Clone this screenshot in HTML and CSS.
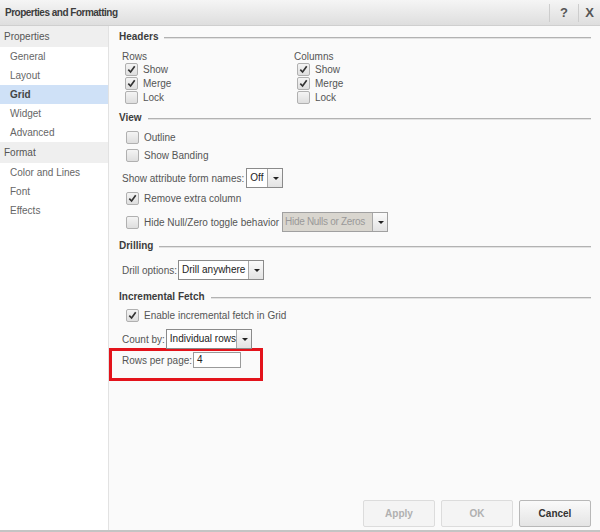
FILE: index.html
```html
<!DOCTYPE html>
<html lang="en">
<head>
  <meta charset="UTF-8" />
  <title>Properties and Formatting</title>
  <link rel="stylesheet" href="styles.css">
</head>
<body>
  <div class="dialog">
    <div class="titlebar">
      <span class="title">Properties and Formatting</span>
      <div class="tb-btns">
        <span class="tb-btn help">?</span>
        <span class="tb-btn close">X</span>
      </div>
    </div>
    <div class="body">
      <nav class="sidebar">
        <div class="nav-head">Properties</div>
        <div class="nav-item">General</div>
        <div class="nav-item">Layout</div>
        <div class="nav-item active">Grid</div>
        <div class="nav-item">Widget</div>
        <div class="nav-item">Advanced</div>
        <div class="nav-head">Format</div>
        <div class="nav-item">Color and Lines</div>
        <div class="nav-item">Font</div>
        <div class="nav-item">Effects</div>
      </nav>
      <main class="content">
        <div class="panel">
          <div class="sec-title">Headers</div>
          <div class="headers-grid">
            <div class="col">
              <div class="col-label">Rows</div>
              <label class="cb-row tight"><span class="cb checked"><svg viewBox="0 0 12 12"><path d="M2.5 6.2 L5 8.8 L9.5 2.5"/></svg></span>Show</label>
              <label class="cb-row tight"><span class="cb checked"><svg viewBox="0 0 12 12"><path d="M2.5 6.2 L5 8.8 L9.5 2.5"/></svg></span>Merge</label>
              <label class="cb-row tight"><span class="cb"></span>Lock</label>
            </div>
            <div class="col">
              <div class="col-label">Columns</div>
              <label class="cb-row tight"><span class="cb checked"><svg viewBox="0 0 12 12"><path d="M2.5 6.2 L5 8.8 L9.5 2.5"/></svg></span>Show</label>
              <label class="cb-row tight"><span class="cb checked"><svg viewBox="0 0 12 12"><path d="M2.5 6.2 L5 8.8 L9.5 2.5"/></svg></span>Merge</label>
              <label class="cb-row tight"><span class="cb"></span>Lock</label>
            </div>
          </div>

          <div class="sec-title view-title">View</div>
          <label class="cb-row outline-row"><span class="cb"></span>Outline</label>
          <label class="cb-row"><span class="cb"></span>Show Banding</label>
          <div class="field-row attr-row">
            <span>Show attribute form names:</span>
            <span class="select sel-off"><span class="sel-text">Off</span><span class="sel-arrow"></span></span>
          </div>
          <label class="cb-row remove-row"><span class="cb checked"><svg viewBox="0 0 12 12"><path d="M2.5 6.2 L5 8.8 L9.5 2.5"/></svg></span>Remove extra column</label>
          <div class="field-row cb-field hide-row">
            <span class="cb"></span>
            <span class="cb-text">Hide Null/Zero toggle behavior</span>
            <span class="select disabled sel-hide"><span class="sel-text">Hide Nulls or Zeros</span><span class="sel-arrow"></span></span>
          </div>

          <div class="sec-title drill-title">Drilling</div>
          <div class="field-row drill-row">
            <span>Drill options:</span>
            <span class="select sel-drill"><span class="sel-text">Drill anywhere</span><span class="sel-arrow"></span></span>
          </div>

          <div class="sec-title fetch-title">Incremental Fetch</div>
          <label class="cb-row enable-row"><span class="cb checked"><svg viewBox="0 0 12 12"><path d="M2.5 6.2 L5 8.8 L9.5 2.5"/></svg></span>Enable incremental fetch in Grid</label>
          <div class="field-row count-row">
            <span>Count by:</span>
            <span class="select sel-count"><span class="sel-text">Individual rows</span><span class="sel-arrow"></span></span>
          </div>
          <div class="highlight">
            <div class="field-row">
              <span>Rows per page:</span>
              <span class="text-input">4</span>
            </div>
          </div>
        </div>
        <div class="footer">
          <button class="btn" disabled>Apply</button>
          <button class="btn" disabled>OK</button>
          <button class="btn primary">Cancel</button>
        </div>
      </main>
    </div>
  </div>
</body>
</html>
```

FILE: styles.css
```css
html, body {
  margin: 0;
  padding: 0;
}
body {
  font-family: "Liberation Sans", Arial, sans-serif;
  font-size: 10px;
  color: #444;
  background: #fff;
}
.dialog {
  width: 600px;
  height: 532px;
  display: flex;
  flex-direction: column;
  box-sizing: border-box;
  border-bottom: 2px solid #c4c4c4;
}
.titlebar {
  height: 25px;
  border-bottom: 1px solid #cfcfcf;
  background: linear-gradient(#f5f5f5, #dedede);
  display: flex;
  align-items: center;
  justify-content: space-between;
  padding-left: 5px;
}
.title {
  font-weight: bold;
  font-size: 10px;
  color: #3c3c3c;
  letter-spacing: -0.5px;
}
.tb-btns {
  display: flex;
  height: 100%;
  align-items: center;
}
.tb-btn {
  height: 18px;
  line-height: 18px;
  text-align: center;
  font-weight: bold;
  font-size: 13px;
  color: #555;
  border-left: 1px solid #cdcdcd;
}
.tb-btn.help { width: 28px; }
.tb-btn.close { width: 21px; }
.body {
  flex: 1;
  display: flex;
  min-height: 0;
}
.sidebar {
  width: 108px;
  border-right: 1px solid #e2e2e2;
  background: #fff;
  flex-shrink: 0;
}
.nav-head {
  height: 21px;
  line-height: 22px;
  padding-left: 4px;
  background: #efefef;
  color: #555;
}
.nav-item {
  height: 19px;
  line-height: 20px;
  padding-left: 10px;
  color: #666;
}
.nav-item.active {
  background: #cfe1f7;
  font-weight: bold;
  color: #444;
}
.content {
  flex: 1;
  background: #fafafa;
  display: flex;
  flex-direction: column;
  padding: 3px 9px 3px 10px;
}
.panel {
  flex: 1;
}
.sec-title {
  height: 16px;
  line-height: 16px;
  font-weight: bold;
  color: #3c3c3c;
  display: flex;
  align-items: center;
  gap: 6px;
}
.sec-title::after {
  content: "";
  flex: 1;
  height: 1px;
  background: #b2b2b2;
  box-shadow: 0 1px 0 #e2e2e2;
}
.headers-grid {
  display: grid;
  grid-template-columns: 172px 1fr;
  padding-left: 3px;
  margin-top: 5px;
}
.col-label {
  height: 12px;
  line-height: 14px;
  color: #555;
}
.cb-row {
  display: flex;
  align-items: center;
  gap: 5px;
  height: 18px;
  padding-left: 7px;
  color: #555;
}
.headers-grid .cb-row {
  padding-left: 3px;
}
.cb-row.tight {
  height: 14px;
}
.cb {
  width: 11px;
  height: 11px;
  border: 1px solid #b0b0b0;
  border-radius: 2px;
  background: linear-gradient(#f4f4f4, #dedede);
  display: inline-flex;
  flex-shrink: 0;
}
.cb svg {
  width: 11px;
  height: 11px;
}
.cb svg path {
  fill: none;
  stroke: #333;
  stroke-width: 1.8;
}
.view-title { margin-top: 6px; }
.outline-row { margin-top: 2px; }
.field-row {
  display: flex;
  align-items: center;
  gap: 2px;
  height: 20px;
  padding-left: 3px;
  color: #555;
}
.cb-field {
  padding-left: 7px;
  gap: 0;
}
.cb-field .cb-text {
  margin-left: 5px;
  margin-right: 3px;
}
.attr-row { margin-top: 4px; }
.remove-row { margin-top: 1px; }
.hide-row { margin-top: 5px; }
.drill-title { margin-top: 6px; }
.drill-row { margin-top: 6px; }
.fetch-title { margin-top: 9px; }
.enable-row { margin-top: 1px; }
.count-row { margin-top: 5px; }
.drill-row, .count-row { gap: 1px; }
.select {
  display: inline-flex;
  height: 20px;
  box-sizing: border-box;
  border: 1px solid #8a8a8a;
  background: #fff;
  color: #222;
}
.sel-text {
  flex: 1;
  line-height: 18px;
  padding-left: 3px;
  white-space: nowrap;
  overflow: hidden;
}
.sel-arrow {
  width: 14px;
  flex-shrink: 0;
  border-left: 1px solid #a8a8a8;
  background: linear-gradient(#fbfbfb, #e3e3e3);
  position: relative;
}
.sel-arrow::after {
  content: "";
  position: absolute;
  left: 5px;
  top: 8px;
  border-left: 3px solid transparent;
  border-right: 3px solid transparent;
  border-top: 3px solid #222;
}
.sel-off { width: 37px; }
.sel-hide { width: 106px; }
.sel-drill { width: 86px; }
.sel-count { width: 86px; }
.select.disabled {
  background: #d9d6cf;
  border-color: #a0a0a0;
}
.select.disabled .sel-text {
  color: #999;
  padding-left: 2px;
  letter-spacing: -0.3px;
}
.highlight {
  margin: -1px 0 0 -10px;
  width: 141px;
  height: 27px;
  border: 3px solid #e3131b;
  padding: 0 0 0 7px;
}
.highlight .field-row {
  height: 16px;
  margin-top: 1px;
  gap: 1px;
}
.text-input {
  width: 48px;
  height: 16px;
  box-sizing: border-box;
  border: 1px solid #9a9a9a;
  background: #fff;
  line-height: 14px;
  padding-left: 3px;
  color: #222;
}
.footer {
  display: flex;
  justify-content: flex-end;
  gap: 6px;
}
.btn {
  width: 72px;
  height: 27px;
  font-family: "Liberation Sans", Arial, sans-serif;
  font-size: 10px;
  font-weight: bold;
  border: 1px solid #b8b8b8;
  border-radius: 2px;
  background: linear-gradient(#fafafa, #e4e4e4);
  color: #333;
}
.btn:disabled {
  background: #f4f4f4;
  border-color: #dcdcdc;
  color: #b0b0b0;
}
```
